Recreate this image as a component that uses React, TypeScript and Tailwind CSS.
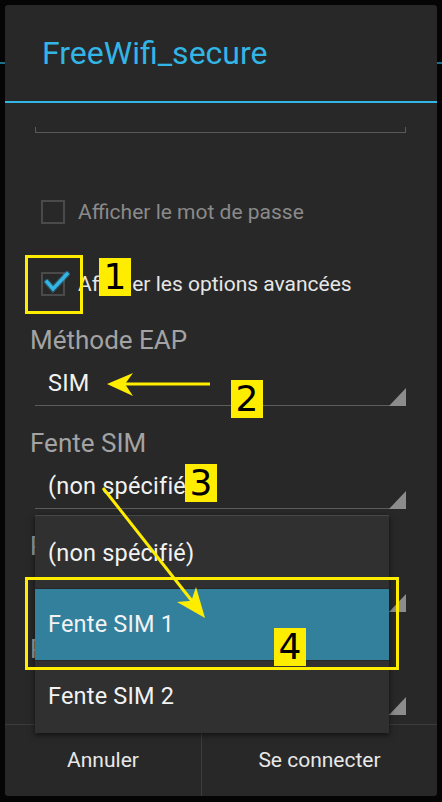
import React from "react";

const font = { fontFamily: "Roboto, 'Noto Sans', sans-serif" };

const Corner = () => (
  <svg width="17" height="18" viewBox="0 0 17 18" className="shrink-0 -mb-px">
    <polygon points="17,0 17,18 0,18" fill="#8c8c8c" />
  </svg>
);

const Field = ({ label, value }: { label: string; value: string }) => (
  <div className="flex flex-col">
    <div className="h-[28px] pl-[25px] flex items-center text-[26px] text-[#a3a3a3] leading-none whitespace-nowrap">
      {label}
    </div>
    <div className="ml-[30px] w-[371px] pt-[16px] flex items-end justify-between border-b border-[#5c5c5c]">
      <span className="h-[28px] mb-[7px] pl-[13px] flex items-center text-[23.5px] tracking-[0.2px] text-[#f2f2f2] leading-none whitespace-nowrap">
        {value}
      </span>
      <Corner />
    </div>
  </div>
);

const Checkbox = ({ checked, text }: { checked: boolean; text: string }) => (
  <div className="h-[72px] flex items-center pl-[36px]">
    <div className="relative w-[24px] h-[24px] border-2 border-[#4a4a4a] shrink-0">
      {checked && (
        <svg width="34" height="30" viewBox="0 0 34 30" className="absolute -left-[2px] -top-[10px] overflow-visible">
          <path d="M6 18 L12 25 L26 10" fill="none" stroke="#33b5e5" strokeWidth="6" opacity="0.3" strokeLinecap="round" />
          <path d="M6 18 L12 25 L26 10" fill="none" stroke="#33b5e5" strokeWidth="3.5" strokeLinecap="square" />
        </svg>
      )}
    </div>
    <span className={`ml-[13px] text-[21px] leading-none whitespace-nowrap ${checked ? "text-[#e6e6e6]" : "text-[#8a8a8a]"}`}>
      {text}
    </span>
  </div>
);

const Tag = ({ n, className }: { n: string; className: string }) => (
  <div
    className={`absolute w-[32px] h-[38px] bg-[#ffed00] flex items-center justify-center text-black text-[36px] leading-none ${className}`}
    style={{ fontFamily: "'DejaVu Sans', sans-serif" }}
  >
    {n}
  </div>
);

export default function App() {
  return (
    <div className="relative w-[442px] h-[802px] bg-[#050505] overflow-hidden" style={font}>
      {/* screen behind the dialog */}
      <div className="pt-[62px]">
        <div className="h-[2px] bg-[#1d6f8c]" />
      </div>

      {/* dialog */}
      <div className="absolute left-[5px] top-[5px] w-[432px] h-[791px] bg-[#282828] rounded-[3px] flex flex-col overflow-hidden">
        <div className="h-[96px] shrink-0 flex items-center pl-[37px] text-[32px] text-[#33b5e5] leading-none">
          FreeWifi_secure
        </div>
        <div className="h-[2px] bg-[#33b5e5] shrink-0" />

        <div className="flex-1 overflow-hidden flex flex-col">
          <div className="mt-[24px] ml-[30px] w-[371px] h-[6px] border-x border-b border-[#5a5a5a] shrink-0" />
          <div className="mt-[43px]">
            <Checkbox checked={false} text="Afficher le mot de passe" />
            <Checkbox checked={true} text="Afficher les options avancées" />
          </div>
          <div className="mt-[6px] flex flex-col gap-[23px]">
            <Field label="Méthode EAP" value="SIM" />
            <Field label="Fente SIM" value="(non spécifié)" />
            <Field label="Paramètres proxy" value="Aucun" />
            <Field label="Paramètres IP" value="DHCP" />
          </div>
        </div>

        <div className="h-[72px] shrink-0 border-t border-[#3c3c3c] flex text-[21px] text-[#e8e8e8]">
          <div className="w-[196px] flex items-center justify-center">Annuler</div>
          <div className="flex-1 border-l border-[#3c3c3c] flex items-center justify-center">Se connecter</div>
        </div>
      </div>

      {/* dropdown popup */}
      <div className="absolute left-[35px] top-[515px] w-[354px] bg-[#303030] border-t border-[#474747] shadow-[0_2px_6px_rgba(0,0,0,0.6)] flex flex-col text-[23.5px] tracking-[0.2px] text-[#f2f2f2]">
        <div className="h-[72px] flex items-center pl-[13px] pt-[3px]">(non spécifié)</div>
        <div className="h-[73px] flex items-center pl-[13px] bg-[#33809c] border-y border-[#262626]">Fente SIM 1</div>
        <div className="h-[72px] flex items-center pl-[13px]">Fente SIM 2</div>
      </div>

      {/* annotations */}
      <svg className="absolute left-0 top-0 pointer-events-none" width="442" height="802" viewBox="0 0 442 802">
        <rect x="26.5" y="256.5" width="55" height="56" fill="none" stroke="#ffed00" strokeWidth="3" />
        <rect x="26.5" y="578.5" width="371" height="90" fill="none" stroke="#ffed00" strokeWidth="3" />
        <line x1="210" y1="384" x2="122" y2="384" stroke="#ffed00" strokeWidth="3" />
        <polygon points="107,384 133,373 125,384 133,396" fill="#ffed00" />
        <line x1="103" y1="488" x2="192" y2="601" stroke="#ffed00" strokeWidth="3" />
        <polygon points="205,618 177,602 191.4,600.7 196,587" fill="#ffed00" />
      </svg>
      <Tag n="1" className="left-[99px] top-[258px]" />
      <Tag n="2" className="left-[231px] top-[380px]" />
      <Tag n="3" className="left-[185px] top-[464px]" />
      <Tag n="4" className="left-[274px] top-[628px]" />
    </div>
  );
}
